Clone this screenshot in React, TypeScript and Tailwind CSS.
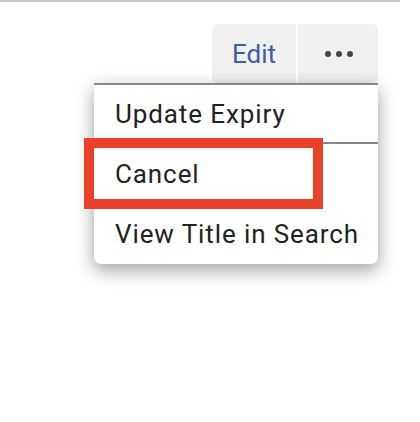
import React from "react";

export default function App() {
  return (
    <div className="relative w-[420px] h-[422px] bg-white overflow-hidden" style={{ fontFamily: "Roboto, 'Liberation Sans', sans-serif" }}>
      <div className="w-[400px] h-[2px] bg-[#c9c9c9]" />
      <div className="flex justify-end pr-[42px] pt-[22px]">
        <div className="flex h-[59px] gap-[2px]">
          <button className="w-[84px] h-full rounded-l-[6px] bg-[#f0f0f0] text-[26px] leading-none text-[#3f5da0] flex items-center justify-center pt-[1px]">
            Edit
          </button>
          <button className="w-[80px] h-full rounded-r-[6px] bg-[#f0f0f0] flex items-center justify-center gap-[5px] pl-[2px]">
            <span className="w-[6px] h-[6px] rounded-full bg-[#444]" />
            <span className="w-[6px] h-[6px] rounded-full bg-[#444]" />
            <span className="w-[6px] h-[6px] rounded-full bg-[#444]" />
          </button>
        </div>
      </div>
      <div className="absolute left-[94px] top-[83px] w-[284px] bg-white border-t-2 border-[#888] rounded-b-[7px] shadow-[0_6px_18px_rgba(0,0,0,0.38)] text-[26px] tracking-[0.9px] text-[#222]">
        <div className="h-[57px] flex items-center pl-[21px] pt-[1px]">Update Expiry</div>
        <div className="h-[2px] bg-[#888]" />
        <div className="h-[60px] flex items-center pl-[21px] pt-[1px]">Cancel</div>
        <div className="h-[60px] flex items-center pl-[21px] pt-[1px]">View Title in Search</div>
      </div>
      <div className="absolute left-[84px] top-[138px] w-[239px] h-[71px] border-[10px] border-[#e9412a]" />
    </div>
  );
}
